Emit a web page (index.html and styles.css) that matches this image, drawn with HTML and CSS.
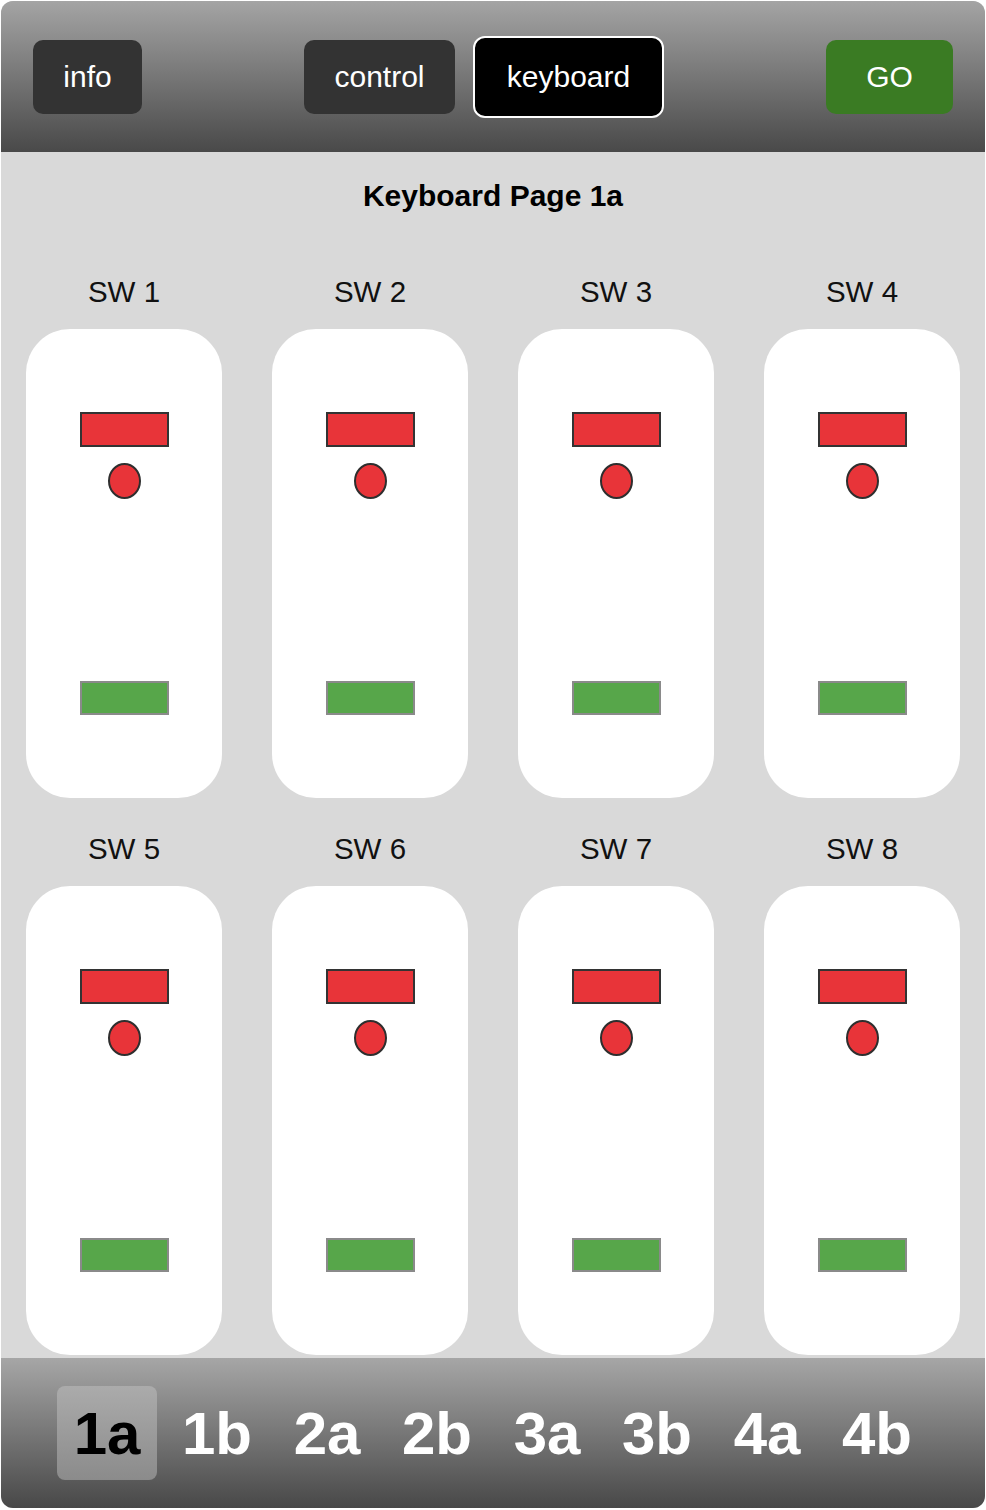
FILE: index.html
```html
<!DOCTYPE html>
<html>
<head>
<meta charset="utf-8">
<link rel="stylesheet" href="styles.css">
</head>
<body>
<div class="app">
  <header class="topbar">
    <div class="btn btn-info">info</div>
    <div class="mid">
      <div class="btn btn-control">control</div>
      <div class="btn btn-keyboard">keyboard</div>
    </div>
    <div class="btn btn-go">GO</div>
  </header>
  <main class="content">
    <h1 class="title">Keyboard Page 1a</h1>
    <div class="grid">
      <div class="sw"><div class="label">SW 1</div><div class="card"><div class="red-bar"></div><div class="dot"></div><div class="green-bar"></div></div></div>
      <div class="sw"><div class="label">SW 2</div><div class="card"><div class="red-bar"></div><div class="dot"></div><div class="green-bar"></div></div></div>
      <div class="sw"><div class="label">SW 3</div><div class="card"><div class="red-bar"></div><div class="dot"></div><div class="green-bar"></div></div></div>
      <div class="sw"><div class="label">SW 4</div><div class="card"><div class="red-bar"></div><div class="dot"></div><div class="green-bar"></div></div></div>
      <div class="sw"><div class="label">SW 5</div><div class="card"><div class="red-bar"></div><div class="dot"></div><div class="green-bar"></div></div></div>
      <div class="sw"><div class="label">SW 6</div><div class="card"><div class="red-bar"></div><div class="dot"></div><div class="green-bar"></div></div></div>
      <div class="sw"><div class="label">SW 7</div><div class="card"><div class="red-bar"></div><div class="dot"></div><div class="green-bar"></div></div></div>
      <div class="sw"><div class="label">SW 8</div><div class="card"><div class="red-bar"></div><div class="dot"></div><div class="green-bar"></div></div></div>
    </div>
  </main>
  <footer class="pager">
    <div class="tab active">1a</div>
    <div class="tab">1b</div>
    <div class="tab">2a</div>
    <div class="tab">2b</div>
    <div class="tab">3a</div>
    <div class="tab">3b</div>
    <div class="tab">4a</div>
    <div class="tab">4b</div>
  </footer>
</div>
</body>
</html>
```

FILE: styles.css
```css
* { box-sizing: border-box; }
html, body { margin: 0; padding: 0; background: #ffffff; }
body {
  padding: 1px;
  font-family: "Liberation Sans", Arial, sans-serif;
}
.app {
  width: 984px;
  height: 1507px;
  border-radius: 12px;
  overflow: hidden;
  background: #d9d9d9;
  display: flex;
  flex-direction: column;
}
.topbar {
  height: 151px;
  flex: none;
  background: linear-gradient(to bottom, #a4a4a4, #494949);
  display: flex;
  align-items: center;
  justify-content: space-between;
  padding: 0 32px;
}
.mid { display: flex; align-items: center; gap: 18px; }
.btn {
  height: 74px;
  display: flex;
  align-items: center;
  justify-content: center;
  color: #ffffff;
  font-size: 30px;
  border-radius: 10px;
  background: #333333;
}
.btn-info { width: 109px; }
.btn-control { width: 151px; }
.btn-keyboard {
  width: 191px;
  height: 82px;
  background: #000000;
  border: 2px solid #ffffff;
  border-radius: 12px;
}
.btn-go { width: 127px; background: #3a7b23; }
.content {
  flex: 1;
  padding: 27px 25px 0;
}
.title {
  margin: 0;
  text-align: center;
  font-size: 30px;
  line-height: 34px;
  font-weight: bold;
  color: #000000;
}
.grid {
  margin-top: 62px;
  display: grid;
  grid-template-columns: repeat(4, 196px);
  column-gap: 50px;
  row-gap: 34px;
}
.sw { display: flex; flex-direction: column; align-items: center; }
.label {
  font-size: 29.5px;
  line-height: 34px;
  color: #111111;
  margin-bottom: 20px;
}
.card {
  width: 196px;
  height: 469px;
  background: #ffffff;
  border-radius: 44px;
  display: flex;
  flex-direction: column;
  align-items: center;
  padding-top: 83px;
}
.red-bar {
  width: 89px;
  height: 35px;
  background: #e83439;
  border: 2px solid #333333;
}
.dot {
  margin-top: 16px;
  width: 33px;
  height: 36px;
  border-radius: 50%;
  background: #e83439;
  border: 2px solid #2e2e2e;
}
.green-bar {
  margin-top: 182px;
  width: 89px;
  height: 34px;
  background: #57a64a;
  border: 2px solid #8a8a8a;
}
.pager {
  height: 150px;
  flex: none;
  background: linear-gradient(to bottom, #a6a6a6, #484848);
  display: flex;
  align-items: center;
  justify-content: center;
  gap: 10px;
  padding-right: 2px;
}
.tab {
  width: 100px;
  height: 94px;
  display: flex;
  align-items: center;
  justify-content: center;
  font-size: 60px;
  font-weight: bold;
  color: #ffffff;
  border-radius: 8px;
}
.tab.active {
  color: #000000;
  background: linear-gradient(to bottom, #ababab, #8b8b8b);
}
```
